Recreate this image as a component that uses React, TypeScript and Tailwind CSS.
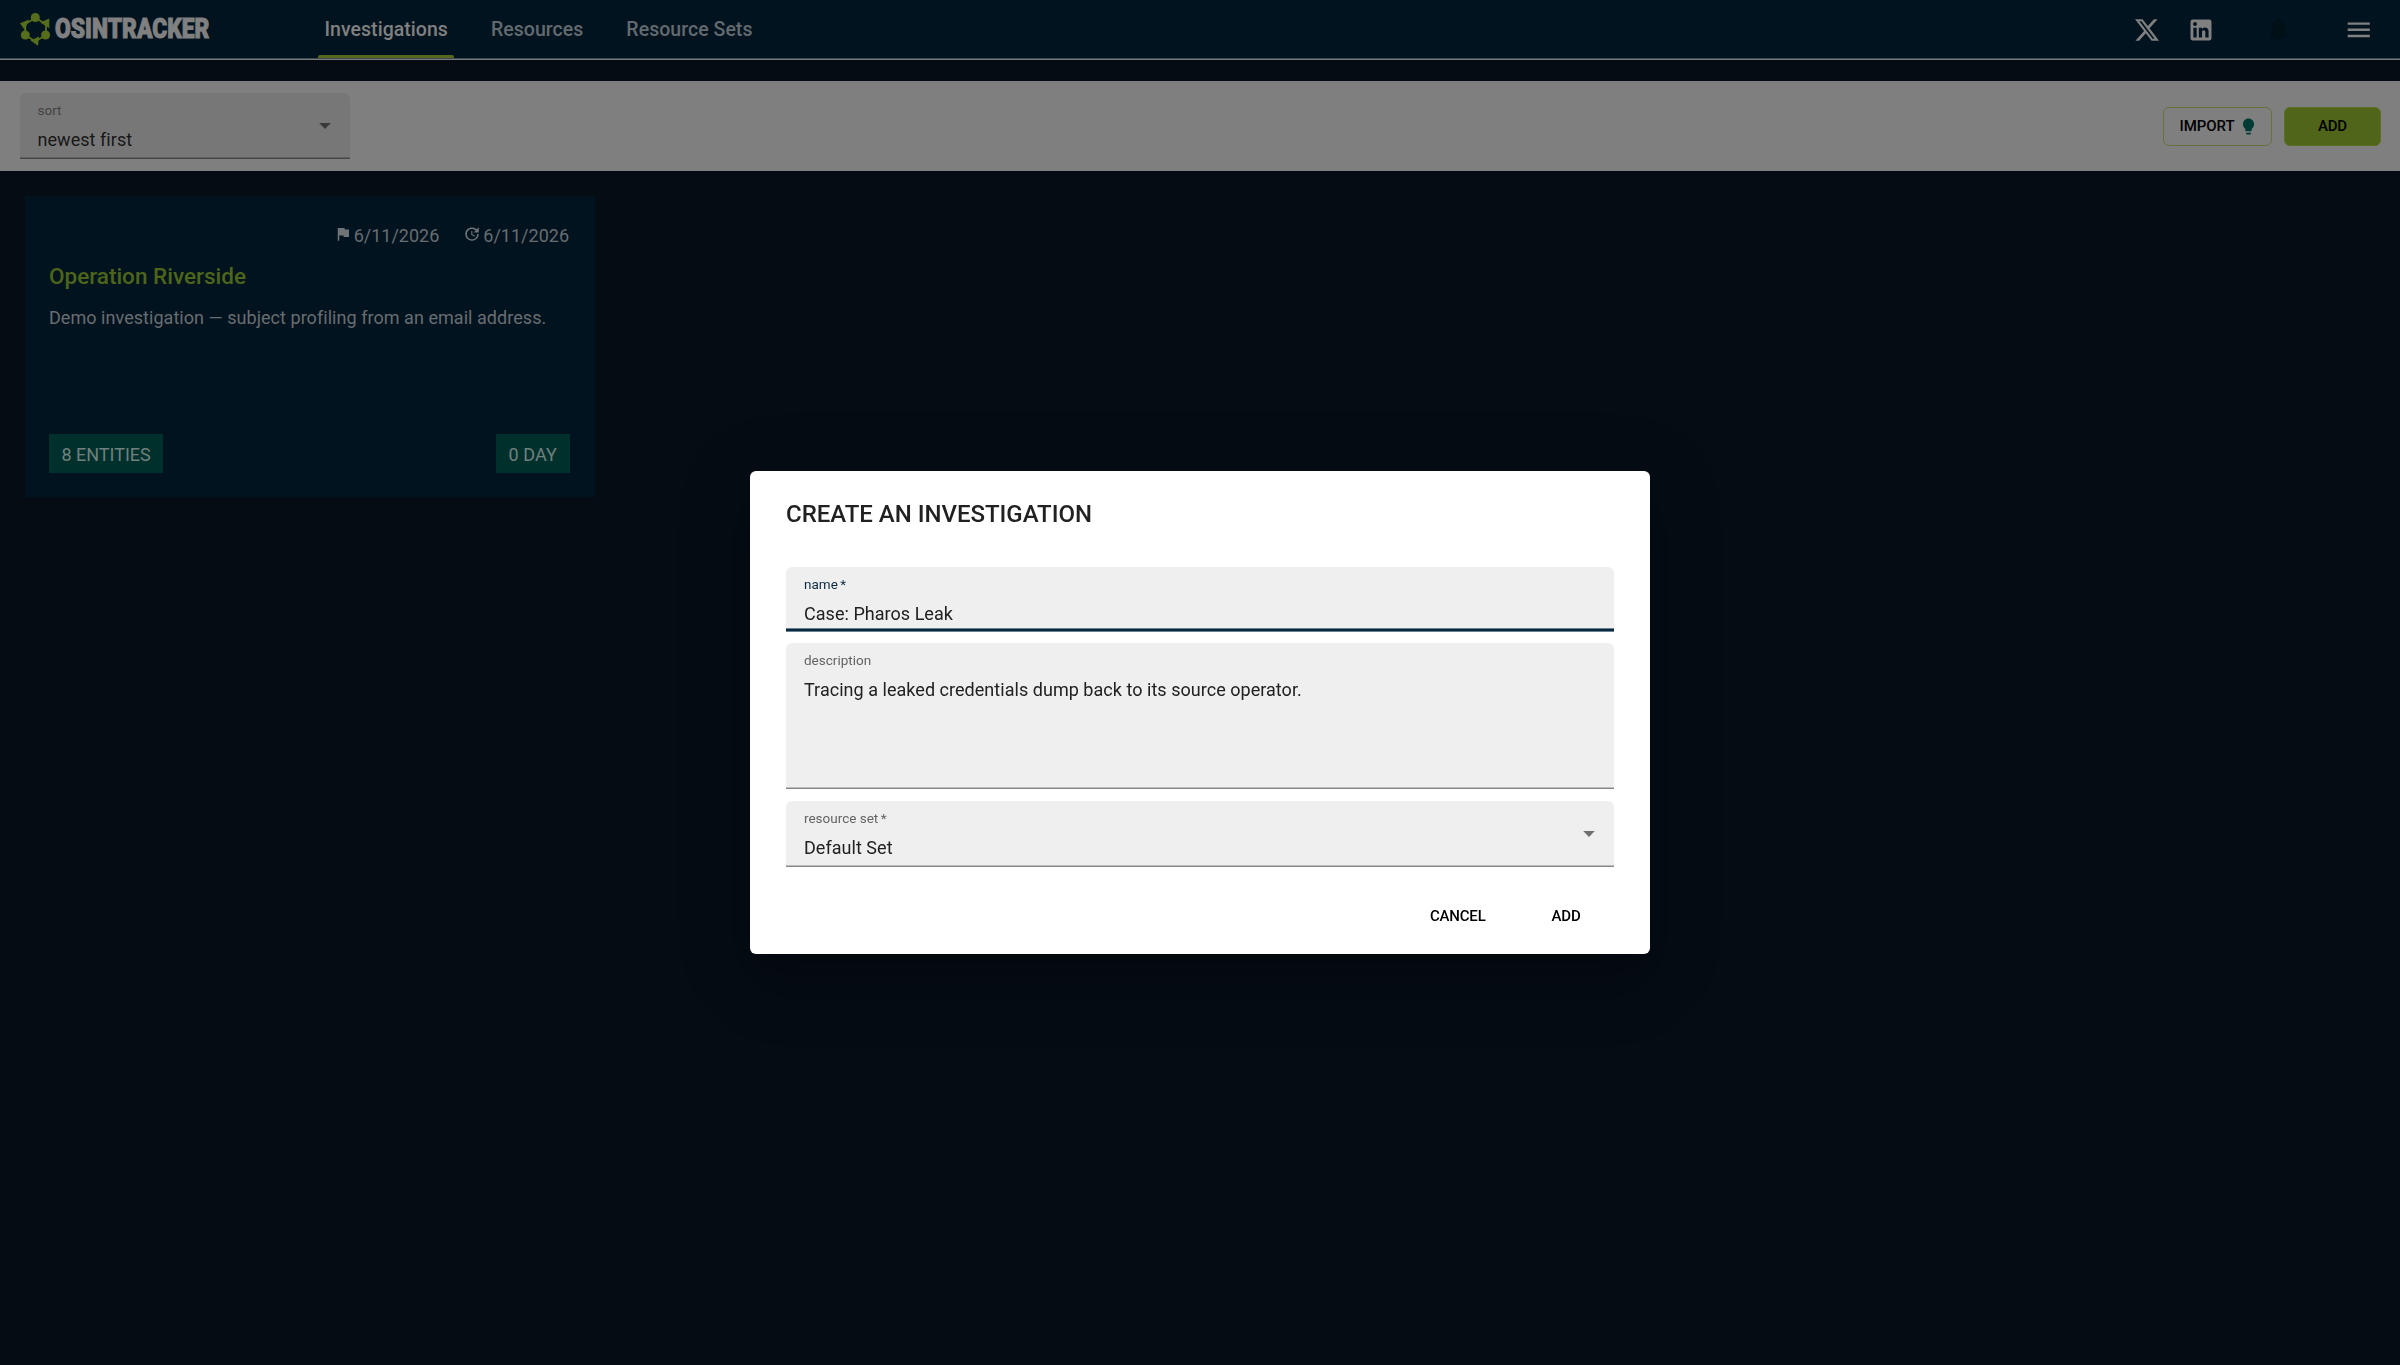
import type { ReactNode } from "react";

function Icon({ d, className, viewBox = "0 0 24 24" }: { d: string; className: string; viewBox?: string }) {
  return (
    <svg viewBox={viewBox} className={className} fill="currentColor" aria-hidden="true">
      <path d={d} />
    </svg>
  );
}

const paths = {
  x: "M18.901 1.153h3.68l-8.04 9.19L24 22.846h-7.406l-5.8-7.584-6.638 7.584H.474l8.6-9.83L0 1.154h7.594l5.243 6.932ZM17.61 20.644h2.039L6.486 3.24H4.298Z",
  linkedin:
    "M19 3a2 2 0 0 1 2 2v14a2 2 0 0 1-2 2H5a2 2 0 0 1-2-2V5a2 2 0 0 1 2-2h14m-.5 15.5v-5.3a3.26 3.26 0 0 0-3.26-3.26c-.85 0-1.84.52-2.32 1.3v-1.11h-2.79v8.37h2.79v-4.93c0-.77.62-1.4 1.39-1.4a1.4 1.4 0 0 1 1.4 1.4v4.93h2.79M6.88 8.56a1.68 1.68 0 0 0 1.68-1.68c0-.93-.75-1.69-1.68-1.69a1.69 1.69 0 0 0-1.69 1.69c0 .93.76 1.68 1.69 1.68m1.39 9.94v-8.37H5.5v8.37h2.77z",
  bell: "M12 22c1.1 0 2-.9 2-2h-4c0 1.1.89 2 2 2zm6-6v-5c0-3.07-1.64-5.64-4.5-6.32V4c0-.83-.67-1.5-1.5-1.5s-1.5.67-1.5 1.5v.68C7.63 5.36 6 7.92 6 11v5l-2 2v1h16v-1l-2-2z",
  menu: "M3 18h18v-2H3v2zm0-5h18v-2H3v2zm0-7v2h18V6H3z",
  bulb: "M9 21c0 .55.45 1 1 1h4c.55 0 1-.45 1-1v-1H9v1zm3-19C8.14 2 5 5.14 5 9c0 2.38 1.19 4.47 3 5.74V17c0 .55.45 1 1 1h6c.55 0 1-.45 1-1v-2.26c1.81-1.27 3-3.36 3-5.74 0-3.86-3.14-7-7-7z",
  flag: "M14.4 6L14 4H5v17h2v-7h5.6l.4 2h7V6z",
  update:
    "M21 10.12h-6.78l2.74-2.82c-2.73-2.7-7.15-2.8-9.88-.1-2.73 2.71-2.73 7.08 0 9.79s7.15 2.71 9.88 0C18.32 15.65 19 14.08 19 12.1h2c0 1.98-.88 4.55-2.64 6.29-3.51 3.48-9.21 3.48-12.72 0-3.5-3.47-3.53-9.11-.02-12.58s9.14-3.47 12.65 0L21 3v7.12zM12.5 8v4.25l3.5 2.08-.72 1.21L11 13V8h1.5z",
};

function Logo() {
  return (
    <div className="flex w-[300px] items-center text-[#808080]">
      <svg viewBox="19 10 33 37" className="ml-[19px] h-[37px] w-[33px] text-[#566e1c]" fill="currentColor">
        <path d="M35.3 17 46 23v11l-10.700 6.500L25.300 34V23Z" fill="none" stroke="currentColor" strokeWidth="1.800" />
        <circle cx="35.300" cy="16.500" r="4.500" />
        <circle cx="25.300" cy="34" r="4.500" />
        <circle cx="45.600" cy="34" r="4.500" />
        <path d="M20 22.300 29 18.500l-4.300 10.500ZM49.300 17.500v9.800L40.300 21.600ZM30.500 39.500l8.500-4-1 9.300Z" />
      </svg>
      <span className="ml-[3px] block w-[156px] origin-left scale-x-[0.815] text-[28px] font-black leading-none whitespace-nowrap [-webkit-text-stroke:1px_currentColor]">
        OSINTRACKER
      </span>
    </div>
  );
}

function NavTab({ children, active = false }: { children: ReactNode; active?: boolean }) {
  return (
    <div
      className={
        active
          ? "relative flex h-[58px] items-center px-[6.500px] pt-[2px] text-[#808080]"
          : "flex h-[58px] items-center px-[6.500px] pt-[2px] text-[#636a6f]"
      }
    >
      {children}
      {active && <div className="absolute inset-x-0 bottom-0 h-[3px] rounded-t-[2px] bg-[#56681e]" />}
    </div>
  );
}

function Header() {
  return (
    <header className="shrink-0">
      <div className="flex h-[58px] items-center bg-[#01131e]">
        <Logo />
        <nav className="ml-[18px] flex gap-[30px] text-[19.500px] font-medium tracking-[0.040px]">
          <NavTab active>Investigations</NavTab>
          <NavTab>Resources</NavTab>
          <NavTab>Resource Sets</NavTab>
        </nav>
        <div className="ml-auto flex items-center pr-[27px] text-[#808080]">
          <Icon d={paths.x} className="mr-[28px] mt-[2px] size-[24px]" />
          <Icon d={paths.linkedin} className="mr-[50px] mt-[2px] size-[28px]" />
          <Icon d={paths.bell} className="mr-[52px] size-[27px] text-[#010f17]" />
          <Icon d={paths.menu} className="mt-[1px] size-[29.500px]" />
        </div>
      </div>
      <div className="h-px bg-[#41494f]" />
      <div className="h-px bg-[#7a7b7c]" />
    </header>
  );
}

function Caret({ className }: { className: string }) {
  return (
    <svg viewBox="0 0 12 6" className={className} fill="currentColor">
      <path d="M.2 0h11.600L6 6Z" />
    </svg>
  );
}

function Toolbar() {
  return (
    <section className="mt-[21px] flex h-[90px] shrink-0 items-center justify-between bg-[#7f7f7f] pl-[19.500px] pr-[19px]">
      <div className="flex h-[66px] w-[330px] flex-col rounded-t-[6px] bg-[#777777]">
        <div className="flex flex-1 items-center justify-between pl-[18px] pr-[19px]">
          <div className="h-full pt-[7px]">
            <div className="text-[13.500px] leading-[20px] text-[#434343]">sort</div>
            <div className="mt-[9px] text-[18px] leading-[21px] tracking-[0.050px] text-[#171717]">newest first</div>
          </div>
          <Caret className="mt-[2px] h-[6px] w-[12px] text-[#3a3a3a]" />
        </div>
        <div className="h-px bg-[#606060]" />
        <div className="h-px bg-[#454545]" />
      </div>
      <div className="flex gap-[12px] text-[15px] font-medium text-black">
        <button className="flex h-[39px] w-[109px] items-center justify-center rounded-[6px] border border-[#65713f] pl-[2px]">
          <span className="tracking-[-0.050px]">IMPORT</span>
          <Icon d={paths.bulb} className="ml-[4px] size-[19px] text-[#003c35]" />
        </button>
        <button className="h-[39px] w-[97px] rounded-[6px] border border-[#5a6e24] bg-[#50641a] tracking-[-0.200px]">ADD</button>
      </div>
    </section>
  );
}

function DateStamp({ icon }: { icon: string }) {
  return (
    <div className="flex items-start gap-[2px]">
      <Icon d={icon} className="mt-px size-[18px] text-[#6f7477]" />
      <span className="pt-[1px]">6/11/2026</span>
    </div>
  );
}

function InvestigationCard() {
  return (
    <article className="ml-[24.500px] mt-[25px] flex h-[301px] w-[570px] flex-col bg-[#01131e] pl-[24.500px] pr-[25px] pt-[28px] text-[18px] leading-[21px] text-[#686d71]">
      <div className="mr-[0.500px] flex justify-end gap-[24px]">
        <DateStamp icon={paths.flag} />
        <DateStamp icon={paths.update} />
      </div>
      <h2 className="mt-[17px] text-[22.500px] font-medium leading-[26px] text-[#4d651a]">Operation Riverside</h2>
      <p className="mt-[18px] whitespace-nowrap tracking-[0.045px]">
        Demo investigation — subject profiling from an email address.
      </p>
      <div className="mb-[24px] mt-auto flex justify-between text-[#70807f]">
        <span className="flex h-[39px] items-center bg-[#00302b] px-[12.500px] pt-[2px] tracking-[-0.020px]">8 ENTITIES</span>
        <span className="flex h-[39px] items-center bg-[#00302b] px-[12.500px] pt-[2px] tracking-[0.100px]">0 DAY</span>
      </div>
    </article>
  );
}

function FieldLine() {
  return (
    <>
      <div className="h-px bg-[#bcbcbc]" />
      <div className="h-px bg-[#868686]" />
    </>
  );
}

interface FieldTextProps {
  label: string;
  value: string;
  focused?: boolean;
  required?: boolean;
}

function FieldText({ label, value, focused = false, required = false }: FieldTextProps) {
  return (
    <div className="pt-[7px]">
      <div className={focused ? "text-[13.500px] leading-[20px] text-[#0b2b42]" : "text-[13.500px] leading-[20px] text-[#646464]"}>
        {label}
        {required && <span className="ml-[2.500px]">*</span>}
      </div>
      <div className="mt-[9px] text-[18px] leading-[21px] tracking-[0.035px] text-[#212121]">{value}</div>
    </div>
  );
}

function CreateDialog() {
  return (
    <div className="fixed inset-0 flex items-center justify-center pt-[60px]">
      <div
        role="dialog"
        className="flex h-[483px] w-[900px] flex-col rounded-[6px] bg-white px-[36px] shadow-[0_16px_22px_-10px_rgba(0,0,0,0.2),0_36px_57px_4px_rgba(0,0,0,0.14),0_14px_69px_12px_rgba(0,0,0,0.12)]"
      >
        <h1 className="mt-[29px] text-[24px] font-medium leading-[28px] tracking-[-0.020px] text-[#212121]">CREATE AN INVESTIGATION</h1>
        <div className="mt-[39px] flex h-[65px] flex-col justify-between rounded-t-[6px] bg-[#efefef]">
          <div className="h-[61px] pl-[18px]">
            <FieldText label="name" value="Case: Pharos Leak" focused required />
          </div>
          <div className="h-[4px] border-y border-[#6c8290] bg-[#06293f]" />
        </div>
        <div className="mt-[11px] flex h-[146px] flex-col rounded-t-[6px] bg-[#efefef]">
          <div className="flex-1 pl-[18px]">
            <FieldText label="description" value="Tracing a leaked credentials dump back to its source operator." />
          </div>
          <FieldLine />
        </div>
        <div className="mt-[12px] flex h-[66px] flex-col rounded-t-[6px] bg-[#efefef]">
          <div className="flex flex-1 items-center justify-between pl-[18px] pr-[19px]">
            <div className="h-full">
              <FieldText label="resource set" value="Default Set" required />
            </div>
            <Caret className="mt-[2px] h-[6px] w-[12px] text-[#6f6f6f]" />
          </div>
          <FieldLine />
        </div>
        <div className="mt-[30px] flex h-[39px] justify-end pr-[33.500px] text-[15px] font-medium tracking-[-0.200px] text-black">
          <button className="mr-[66px]">CANCEL</button>
          <button>ADD</button>
        </div>
      </div>
    </div>
  );
}

export default function App() {
  return (
    <div className="flex h-[1365px] w-[2400px] flex-col overflow-hidden bg-[#050c14] font-['Roboto',sans-serif]">
      <Header />
      <Toolbar />
      <InvestigationCard />
      <CreateDialog />
    </div>
  );
}
